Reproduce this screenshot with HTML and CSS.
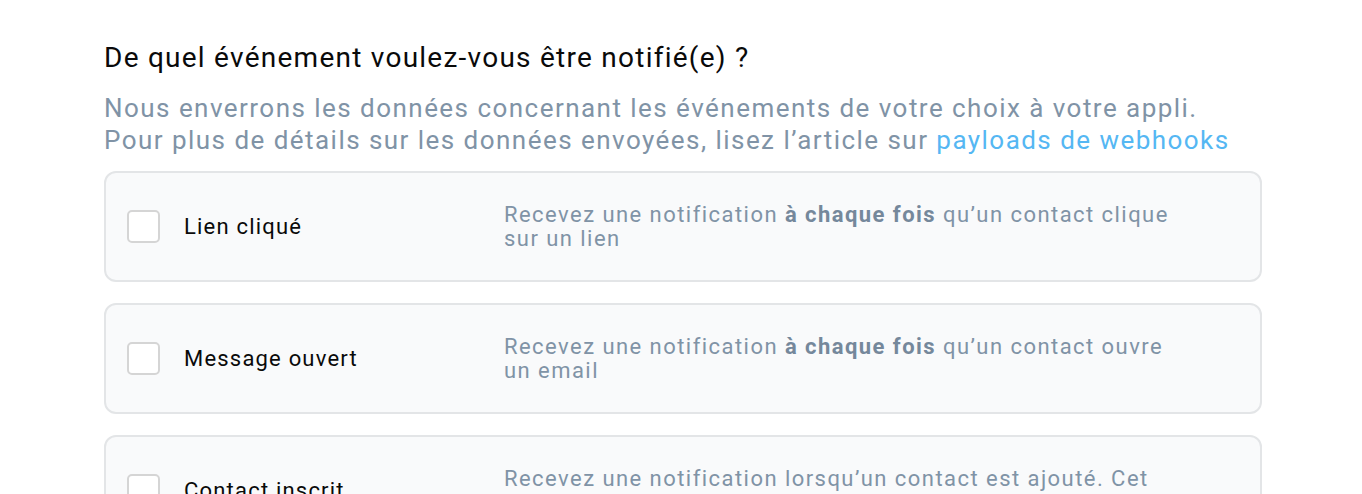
FILE: index.html
```html
<!DOCTYPE html>
<html lang="fr">
<head>
<meta charset="utf-8">
<link rel="stylesheet" href="styles.css">
</head>
<body>
<main class="page">
  <h2 class="title">De quel événement voulez-vous être notifié(e) ?</h2>
  <p class="intro">Nous enverrons les données concernant les événements de votre choix à votre appli.<br>Pour plus de détails sur les données envoyées, lisez l’article sur <a class="link" href="#">payloads de webhooks</a></p>
  <div class="list">
    <label class="card">
      <span class="box"></span>
      <span class="name">Lien cliqué</span>
      <span class="desc">Recevez une notification <b>à chaque fois</b> qu’un contact clique sur un lien</span>
    </label>
    <label class="card">
      <span class="box"></span>
      <span class="name">Message ouvert</span>
      <span class="desc">Recevez une notification <b>à chaque fois</b> qu’un contact ouvre un email</span>
    </label>
    <label class="card">
      <span class="box"></span>
      <span class="name">Contact inscrit</span>
      <span class="desc">Recevez une notification lorsqu’un contact est ajouté. Cet événement est également déclenché pour les mises à jour</span>
    </label>
  </div>
</main>
</body>
</html>
```

FILE: styles.css
```css
* { box-sizing: border-box; }
html, body { margin: 0; padding: 0; background: #fff; }
body { font-family: Roboto, "Noto Sans", sans-serif; }
.page { padding: 40px 0 0 104px; width: 1262px; }
.title { margin: 0; font-size: 28px; font-weight: 400; color: #0a0a0a; line-height: 36px; letter-spacing: 1.25px; }
.intro { margin: 16px 0 0; font-size: 26px; line-height: 32px; color: #8093a6; letter-spacing: 1.46px; }
.link { color: #55b7f3; text-decoration: none; }
.list { display: flex; flex-direction: column; gap: 21px; margin-top: 15px; }
.card { display: flex; align-items: center; height: 111px; border: 2px solid #e3e5e7; border-radius: 12px; background: #f9fafb; padding: 0 0 0 21px; }
.box { width: 33px; height: 33px; flex: none; border: 2px solid #d5d5d5; border-radius: 5px; background: #fff; }
.name { width: 320px; flex: none; margin-left: 24px; font-size: 22px; color: #0a0a0a; letter-spacing: 1.2px; }
.desc { width: 690px; font-size: 22px; line-height: 24px; color: #8093a6; letter-spacing: 1.45px; }
.desc b { font-weight: 700; color: #75889b; }
```
